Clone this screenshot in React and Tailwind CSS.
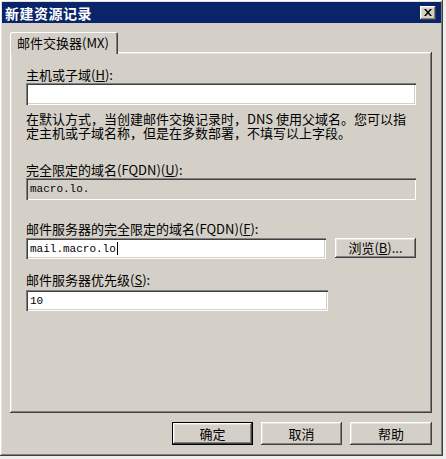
const raised =
  "shadow-[inset_-1px_-1px_#404040,inset_1px_1px_#ffffff,inset_-2px_-2px_#808080,inset_2px_2px_#e4e1db]";
const sunken =
  "shadow-[inset_1px_1px_#808080,inset_2px_2px_#404040,inset_-1px_-1px_#ffffff,inset_-2px_-2px_#d4d0c8]";

function Field({ value, disabled, caret, className = "" }) {
  return (
    <div
      className={`flex items-center pl-[4px] font-['Liberation_Mono',monospace] text-[11px] text-black ${sunken} ${
        disabled ? "bg-[#d4d0c8]" : "bg-white"
      } ${className}`}
    >
      {value}
      {caret && <span className="ml-px inline-block h-[13px] w-px bg-black" />}
    </div>
  );
}

function Button({ children, isDefault, className = "" }) {
  return (
    <button
      className={`flex items-center justify-center bg-[#d4d0c8] text-[13px] text-black ${raised} ${
        isDefault ? "outline outline-1 outline-black -outline-offset-1 border border-black" : ""
      } ${className}`}
    >
      {children}
    </button>
  );
}

export default function App() {
  return (
    <div className="w-[446px] h-[459px] bg-[#eeeeee] font-['Noto_Sans_CJK_SC','Noto_Sans',sans-serif]">
      <div className={`w-[443px] h-[456px] bg-[#d4d0c8] p-[2px] flex flex-col ${raised}`}>
        {/* title bar */}
        <div className="h-[21px] bg-[#0a246a] flex items-center justify-between pl-[3px] pr-[5px]">
          <span className="text-white font-bold text-[14px] leading-none tracking-[0.5px]">新建资源记录</span>
          <div className={`w-[16px] h-[14px] bg-[#d4d0c8] flex items-center justify-center ${raised}`}>
            <svg width="8" height="7" viewBox="0 0 8 7">
              <path d="M0 0h2l2 2.5L6 0h2L5 3.5 8 7H6L4 4.5 2 7H0l3-3.5z" fill="#000" />
            </svg>
          </div>
        </div>

        {/* body */}
        <div className="flex-1 flex flex-col pt-[9px] pl-[8px] pr-[9px]">
          <div className="relative z-10 -mb-[2px] h-[22px] w-[108px] bg-[#d4d0c8] rounded-t-[2px] shadow-[inset_1px_1px_#ffffff,inset_-1px_0_#404040,inset_-2px_0_#808080] flex items-center pl-[7px] text-[13px] text-black">
            邮件交换器(MX)
          </div>
          <div className={`h-[361px] flex flex-col pt-[16px] px-[16px] text-[13px] leading-[14px] text-black ${raised}`}>
            <div>
              主机或子域(<span className="underline">H</span>):
            </div>
            <Field className="mt-[1px] h-[22px]" value="" />
            <div className="mt-[7px] pr-[4px] leading-[14px]">
              在默认方式，当创建邮件交换记录时，DNS 使用父域名。您可以指定主机或子域名称，但是在多数部署，不填写以上字段。
            </div>
            <div className="mt-[23px]">
              完全限定的域名(FQDN)(<span className="underline">U</span>):
            </div>
            <Field className="mt-[1px] h-[22px]" value="macro.lo." disabled />
            <div className="mt-[22px]">
              邮件服务器的完全限定的域名(FQDN)(<span className="underline">F</span>):
            </div>
            <div className="mt-[2px] flex items-start gap-[9px]">
              <Field className="h-[21px] w-[300px]" value="mail.macro.lo" caret />
              <Button className="h-[20px] w-[81px]">
                浏览(<span className="underline">B</span>)...
              </Button>
            </div>
            <div className="mt-[14px]">
              邮件服务器优先级(<span className="underline">S</span>):
            </div>
            <Field className="mt-[3px] h-[21px] w-[302px]" value="10" />
          </div>

          <div className="mt-[9px] flex justify-end gap-[8px]">
            <Button className="h-[23px] w-[81px]" isDefault>
              确定
            </Button>
            <Button className="h-[23px] w-[81px]">取消</Button>
            <Button className="h-[23px] w-[82px]">帮助</Button>
          </div>
        </div>
      </div>
    </div>
  );
}
